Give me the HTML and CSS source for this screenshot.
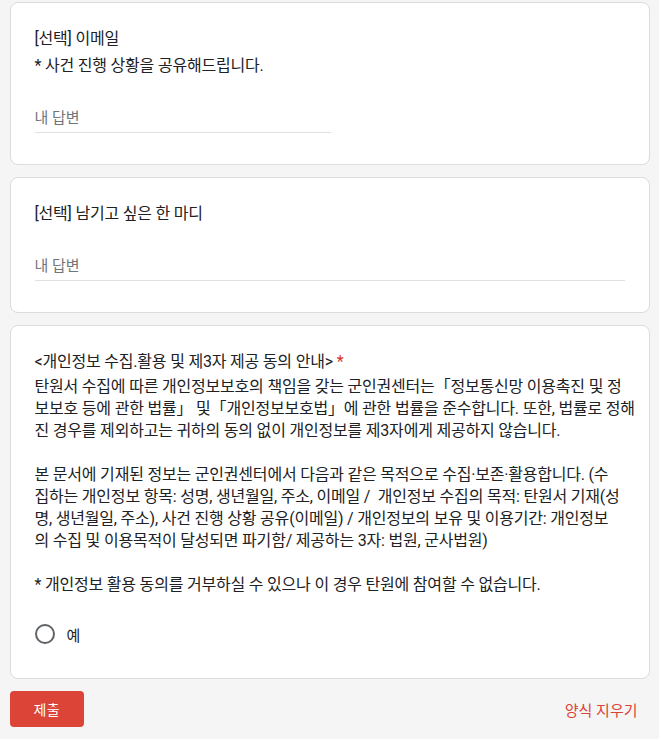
FILE: index.html
```html
<!DOCTYPE html>
<html lang="ko">
<head>
<meta charset="utf-8">
<title>탄원서</title>
<link rel="stylesheet" href="styles.css">
</head>
<body>
<main class="form">
  <section class="card">
    <div class="q-title">[선택] 이메일</div>
    <div class="q-desc">* 사건 진행 상황을 공유해드립니다.</div>
    <div class="answer answer-short"><span class="placeholder">내 답변</span></div>
  </section>

  <section class="card">
    <div class="q-title">[선택] 남기고 싶은 한 마디</div>
    <div class="answer"><span class="placeholder">내 답변</span></div>
  </section>

  <section class="card card-consent">
    <div class="q-title">&lt;개인정보 수집.활용 및 제3자 제공 동의 안내&gt; <span class="required">*</span></div>
    <div class="q-body">
<p>탄원서 수집에 따른 개인정보보호의 책임을 갖는 군인권센터는「정보통신망 이용촉진 및 정
보보호 등에 관한 법률」 및「개인정보보호법」에 관한 법률을 준수합니다. 또한, 법률로 정해
진 경우를 제외하고는 귀하의 동의 없이 개인정보를 제3자에게 제공하지 않습니다.</p>
<p>본 문서에 기재된 정보는 군인권센터에서 다음과 같은 목적으로 수집·보존·활용합니다. (수
집하는 개인정보 항목: 성명, 생년월일, 주소, 이메일 /  개인정보 수집의 목적: 탄원서 기재(성
명, 생년월일, 주소), 사건 진행 상황 공유(이메일) / 개인정보의 보유 및 이용기간: 개인정보
의 수집 및 이용목적이 달성되면 파기함/ 제공하는 3자: 법원, 군사법원)</p>
<p>* 개인정보 활용 동의를 거부하실 수 있으나 이 경우 탄원에 참여할 수 없습니다.</p>
    </div>
    <label class="option">
      <span class="radio"></span>
      <span class="option-label">예</span>
    </label>
  </section>

  <div class="actions">
    <button class="submit" type="button">제출</button>
    <button class="clear" type="button">양식 지우기</button>
  </div>
</main>
</body>
</html>
```

FILE: styles.css
```css
* {
  box-sizing: border-box;
}

html, body {
  margin: 0;
  padding: 0;
  background: #f5f5f5;
}

body {
  font-family: "Roboto", "Noto Sans CJK KR", sans-serif;
  color: #202124;
}

.form {
  width: 640px;
  margin: 2px auto 0;
  display: flex;
  flex-direction: column;
  gap: 12px;
}

.card {
  background: #fff;
  border: 1px solid #dadce0;
  border-radius: 8px;
  padding: 24px;
}

.q-title,
.q-desc,
.q-body {
  font-size: 16px;
  letter-spacing: -0.2px;
}

.q-title {
  line-height: 24px;
}

.required {
  color: #d93025;
}

.q-desc {
  line-height: 24px;
  margin-top: 3px;
}

.answer {
  margin-top: 30px;
  margin-bottom: 7px;
  padding-bottom: 4px;
  border-bottom: 1px solid #e0e0e0;
  line-height: 20px;
}

.answer-short {
  width: 296px;
}

.placeholder {
  font-size: 15px;
  color: #70757a;
}

.card-consent .q-title {
  padding-bottom: 2px;
}

.q-body {
  line-height: 22px;
}

.q-body p {
  margin: 0 0 22px;
  white-space: pre;
}

.q-body p:last-child {
  margin-bottom: 0;
}

.option {
  display: flex;
  align-items: center;
  gap: 12px;
  height: 40px;
  margin-top: 18px;
}

.radio {
  width: 20px;
  height: 20px;
  border: 2px solid #5f6368;
  border-radius: 50%;
  flex: none;
}

.option-label {
  font-size: 15px;
}

.actions {
  display: flex;
  justify-content: space-between;
  align-items: center;
  padding-bottom: 11px;
}

.submit {
  height: 36px;
  padding: 0 24px;
  border: none;
  border-radius: 4px;
  background: #db4437;
  color: #fff;
  font-family: "Roboto", "Noto Sans CJK KR", sans-serif;
  font-size: 14px;
  font-weight: 400;
  letter-spacing: 0.25px;
}

.clear {
  height: 36px;
  padding: 0 12px 0 8px;
  border: none;
  background: transparent;
  color: #db4437;
  font-family: "Roboto", "Noto Sans CJK KR", sans-serif;
  font-size: 15px;
  font-weight: 400;
}
```
